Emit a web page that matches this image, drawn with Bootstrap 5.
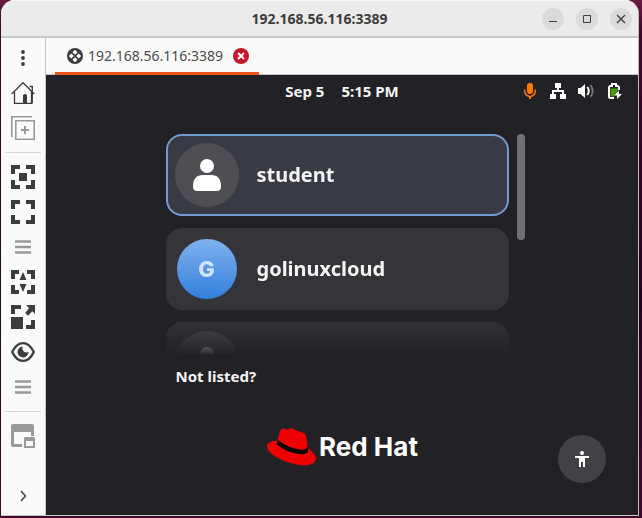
<!DOCTYPE html>
<html lang="en">
<head>
<meta charset="utf-8">
<meta name="viewport" content="width=device-width, initial-scale=1">
<title>192.168.56.116:3389</title>
<link href="https://cdn.jsdelivr.net/npm/bootstrap@5.3.0/dist/css/bootstrap.min.css" rel="stylesheet">
<style>
body{background:linear-gradient(#6a1b42,#3a0a28 30px,#24041a 300px,#3b0a2b);font-family:"Noto Sans",sans-serif;padding:0 3px 2px 1px;color:#3d3d3d}
button{border:0;padding:0;background:none;color:inherit}
svg{display:block;flex:none}
.window{border-radius:14px 14px 0 0;background:#fafafa;border-right:1px solid #bdbdbd;border-bottom:1px solid #c9c6c9}
.titlebar{height:38px;background:#ebebeb;border-top:1px solid #f8f8f8;border-bottom:2px solid #c9c9c9;padding:0 6px}
.titlebar h1{font-size:14px;line-height:20px;font-weight:700}
.side{flex:1 1 0}
.winbtns{gap:12px}
.winbtns button{width:22px;height:22px;border-radius:50%;background:#dadada}
.tools{width:45px;border-right:1px solid #c0c0c0;padding:2px 0}
.tools button{height:35px;width:100%}
.tools hr{width:36px;margin:7px 0 6px;border-top:1px solid #d8d8d8;opacity:1}
.tabs{height:37px;border-bottom:1px solid #c4c4c4;padding-left:9px}
.tab{height:37px;border-bottom:3px solid #e95420;padding:2px 10px 0 12px;font-size:14px;line-height:20px;color:#4a4a4a}
.tab a{color:inherit;text-decoration:none;gap:5px;margin-right:10px}
.remote{background:#222126;color:#f4f4f5}
.panel{height:32px;font-size:15px;font-weight:700;line-height:20px;padding:0 16px}
.clock{gap:17px}
.status{gap:12px}
.login{padding:27px 0 0 6px}
.chooser{width:100%;max-width:359px;margin:0 auto}
.people{height:220px;overflow:hidden;gap:12px;margin-right:8px;-webkit-mask-image:linear-gradient(#000 182px,transparent 222px);mask-image:linear-gradient(#000 182px,transparent 222px)}
.person{flex:none;height:82px;border-radius:16px;background:#353438;padding:0 9px;gap:18px;font-size:20px;line-height:28px;font-weight:700;text-align:left}
.person.current{background:#383b43;border:2px solid #729bd2;padding:0 7px}
.face{width:64px;height:64px;border-radius:50%;background:#4e4e53;flex:none}
.face.initial{width:60px;height:60px;margin:0 2px;background:linear-gradient(#7eb1ee,#337fdc);color:#cfe3fa;font-family:Inter,sans-serif;font-size:22px;font-weight:800}
.thumb{width:8px;height:106px;border-radius:4px;background:#727275;flex:none}
.other{margin:12px 0 0 10px;font-size:15px;line-height:20px;font-weight:700}
.brandrow{padding:41px 32px 32px}
.wordmark{font-family:Inter,sans-serif;font-size:26px;line-height:38px;font-weight:700;color:#fff}
.brandmark{gap:2px}
.access{width:48px;height:48px;border-radius:50%;background:#424145;margin-top:8px}
</style>
<script defer src="https://cdn.jsdelivr.net/npm/bootstrap@5.3.0/dist/js/bootstrap.bundle.min.js"></script>
</head>
<body class="min-vh-100 d-flex flex-column">
<div class="window flex-grow-1 d-flex flex-column overflow-hidden">
  <header class="titlebar d-flex align-items-center">
    <div class="side"></div>
    <h1 class="mb-0">192.168.56.116:3389</h1>
    <div class="side winbtns d-flex justify-content-end">
      <button class="d-flex align-items-center justify-content-center" aria-label="Minimize"><svg width="10" height="10" stroke="#3d3d3d"><path d="M1 7.500h8"/></svg></button>
      <button class="d-flex align-items-center justify-content-center" aria-label="Maximize"><svg width="10" height="10" fill="none" stroke="#3d3d3d"><path d="M1.500 1.500h7v7h-7z"/></svg></button>
      <button class="d-flex align-items-center justify-content-center" aria-label="Close"><svg width="10" height="10" stroke="#3d3d3d" stroke-width="1.300"><path d="M1 1l8 8M9 1L1 9"/></svg></button>
    </div>
  </header>
  <div class="flex-grow-1 d-flex">
    <nav class="tools d-flex flex-column align-items-center flex-shrink-0" aria-label="Session tools">
      <button class="d-flex align-items-center justify-content-center" aria-label="Menu"><svg width="24" height="24" fill="#3d3d3d"><circle cx="12" cy="6" r="1.900"/><circle cx="12" cy="12" r="1.900"/><circle cx="12" cy="18" r="1.900"/></svg></button>
      <button class="d-flex align-items-center justify-content-center" aria-label="Home"><svg width="24" height="24" fill="none" stroke="#3d3d3d" stroke-width="1.300"><path d="M.700 13L12 1.700 23.300 13M3.500 11v11.400h17V10.500M18.500 5.500h2.800v16.900"/><path fill="#3d3d3d" stroke="none" d="M12 14q2.500-2 4 0v9h-4z"/></svg></button>
      <button class="d-flex align-items-center justify-content-center" aria-label="New connection"><svg width="24" height="24" fill="none" stroke="#999" stroke-width="1.600"><path d="M.800 21V.800H21"/><path d="M4.800 4.800h18.400v18.400H4.800z"/><path stroke-width="2" d="M14 10v8M10 14h8"/></svg></button>
      <hr>
      <button class="d-flex align-items-center justify-content-center" aria-label="Fit window"><svg width="24" height="24" fill="none" stroke="#3d3d3d" stroke-width="4"><path d="M2 9V2h7M15 2h7v7M22 15v7h-7M9 22H2v-7"/><path stroke="none" fill="#3d3d3d" d="M8 8h8v8H8z"/></svg></button>
      <button class="d-flex align-items-center justify-content-center" aria-label="Fullscreen"><svg width="24" height="24" fill="none" stroke="#3d3d3d" stroke-width="4"><path d="M2 9V2h7M15 2h7v7M22 15v7h-7M9 22H2v-7"/></svg></button>
      <button class="d-flex align-items-center justify-content-center" aria-label="Multi monitor"><svg width="24" height="24" stroke="#999" stroke-width="2.600"><path d="M4 6.500h16M4 12h16M4 17.500h16"/></svg></button>
      <button class="d-flex align-items-center justify-content-center" aria-label="Dynamic resolution"><svg width="24" height="24" fill="none" stroke="#3d3d3d" stroke-width="4"><path d="M2 9V2h6M16 2h6v7M22 15v7h-6M8 22H2v-7"/><path stroke="none" fill="#3d3d3d" d="M12 2l3.500 8h-7zM12 22l3.500-8h-7z"/></svg></button>
      <button class="d-flex align-items-center justify-content-center" aria-label="Scaled mode"><svg width="24" height="24" fill="none" stroke="#3d3d3d" stroke-width="4"><path d="M2 9V2h8M22 15v7h-7"/><path stroke="none" fill="#3d3d3d" d="M0 12h12v12H0zM15 0h9v9l-2.700-2.700-4.300 4.400L14.300 8 18 3z"/></svg></button>
      <button class="d-flex align-items-center justify-content-center" aria-label="View settings"><svg width="24" height="24" fill="none" stroke="#3d3d3d"><path stroke-width="2.400" d="M1.200 12Q5.500 3.100 12 3.100T22.800 12Q18.500 20.900 12 20.900T1.200 12z"/><path stroke="none" fill="#3d3d3d" d="M11.500 6.500a5.500 5.500 0 1 0 6 5.500q-3.200 1.200-5-.700-1.700-2-1-4.800z"/></svg></button>
      <button class="d-flex align-items-center justify-content-center" aria-label="More options"><svg width="24" height="24" stroke="#999" stroke-width="2.600"><path d="M4 6.500h16M4 12h16M4 17.500h16"/></svg></button>
      <hr>
      <button class="d-flex align-items-center justify-content-center" aria-label="Detach window"><svg width="24" height="24" fill="#999"><path fill-rule="evenodd" d="M2 0h19a2 2 0 0 1 2 2v10h-3V8H3v12h8v3H2a2 2 0 0 1-2-2V2a2 2 0 0 1 2-2zM14 13h9l1 1v10H13V14zM15 17v5h7v-5z"/></svg></button>
      <button class="mt-auto d-flex align-items-center justify-content-center" aria-label="Expand"><svg width="12" height="12" fill="none" stroke="#3d3d3d" stroke-width="1.400"><path d="M4 1l4.500 5L4 11"/></svg></button>
    </nav>
    <main class="flex-grow-1 d-flex flex-column">
      <div class="tabs d-flex">
        <div class="tab d-flex align-items-center">
          <a href="#session" class="d-flex align-items-center"><svg width="16" height="16"><circle cx="8" cy="8" r="8" fill="#3d3d3d"/><path fill="#fafafa" d="M8 1.800l2.500 2.500L8 6.800 5.500 4.300zM8 9.200l2.500 2.500L8 14.200l-2.500-2.500zM4.300 5.500L6.800 8l-2.500 2.500L1.800 8zM11.700 5.500L14.200 8l-2.500 2.500L9.200 8z"/></svg>192.168.56.116:3389</a>
          <button aria-label="Close tab"><svg width="16" height="16"><circle cx="8" cy="8" r="8" fill="#c7162b"/><path d="M5 5l6 6M11 5l-6 6" stroke="#fff" stroke-width="2"/></svg></button>
        </div>
      </div>
      <section id="session" class="remote flex-grow-1 d-flex flex-column">
        <div class="panel d-flex align-items-center">
          <div class="side"></div>
          <div class="clock d-flex"><span>Sep 5</span><span>5:15 PM</span></div>
          <div class="side status d-flex justify-content-end">
            <svg width="16" height="16" fill="none" stroke="#ff7800" role="img" aria-label="Microphone"><rect x="5" y="0" width="6" height="11" rx="3" fill="#ff7800" stroke="none"/><path stroke-width="1.500" d="M2.700 6.500v1.800a5.300 5.100 0 0 0 10.600 0V6.500"/><path stroke-width="2" d="M8 13v3"/></svg>
            <svg width="16" height="16" fill="#fff" role="img" aria-label="Wired network"><path d="M5 0h6v5H9v2h5v4h2v5h-6v-5h2V9H4v2h2v5H0v-5h2V7h5V5H5z"/></svg>
            <svg width="16" height="16" fill="none" stroke="#fff" stroke-width="1.900" role="img" aria-label="Volume"><path fill="#fff" stroke="none" d="M0 5h2.500L7 1v14l-4.500-4H0z"/><path d="M9.300 4q3 4 0 8"/><path stroke="#77767b" d="M12.600 2.300q4.200 5.700 0 11.400"/></svg>
            <svg width="16" height="16" role="img" aria-label="Battery charging"><path fill="none" stroke="#fff" stroke-width="2" d="M8 15H4.500Q3 15 3 13.500V4.500Q3 3 4.500 3H6V1h4v2h1.500Q13 3 13 4.500V7"/><path fill="#4e9a06" d="M4.500 5.500h7.300v2.500L8 12v1.500H4.500z"/><path fill="#fff" d="M13 7.500L8 12.500h3V16l5-5h-3z"/></svg>
          </div>
        </div>
        <div class="login">
          <div class="chooser">
            <div class="d-flex align-items-start">
              <div class="people flex-grow-1 d-flex flex-column">
                <button class="person current d-flex align-items-center"><span class="face d-flex align-items-center justify-content-center"><svg width="28" height="32" fill="#fff"><circle cx="14" cy="7" r="7"/><path d="M0 27.500Q0 16 10 16h8q10 0 10 11.500 0 4.500-4.500 4.500h-19Q0 32 0 27.500z"/></svg></span>student</button>
                <button class="person d-flex align-items-center"><span class="face initial d-flex align-items-center justify-content-center">G</span>golinuxcloud</button>
                <button class="person d-flex align-items-center" aria-label="Another user"><span class="face d-flex align-items-center justify-content-center"><svg width="28" height="32" fill="#fff"><circle cx="14" cy="7" r="7"/><path d="M0 27.500Q0 16 10 16h8q10 0 10 11.500 0 4.500-4.500 4.500h-19Q0 32 0 27.500z"/></svg></span></button>
              </div>
              <div class="thumb"></div>
            </div>
            <button class="other d-block">Not listed?</button>
          </div>
        </div>
        <footer class="brandrow d-flex align-items-start mt-auto">
          <div class="side"></div>
          <div class="brandmark d-flex align-items-center">
            <svg width="51" height="39" viewBox="33 36 153 117"><path fill="#e00" d="M67 77Q39 77 36 91Q33 108 63 126Q98 146 139 151Q178 153 183 133Q184 117 159 99L154 65Q151 55 140 52L119 44Q110 36 103 42Q97 45 88 41Q80 38 76 47Z"/><path fill="#0d0000" d="M69 75Q64 83 68 90Q92 113 137 118Q159 119 160 106L158 93Q157 104 139 104Q101 100 69 75Z"/></svg>
            <span class="wordmark">Red Hat</span>
          </div>
          <div class="side d-flex justify-content-end">
            <button class="access d-flex align-items-center justify-content-center" aria-label="Accessibility"><svg width="16" height="16" fill="#fff"><circle cx="8" cy="2" r="2"/><path d="M1 5h14v2h-4v9H9v-5H7v5H5V7H1z"/></svg></button>
          </div>
        </footer>
      </section>
    </main>
  </div>
</div>
</body>
</html>
